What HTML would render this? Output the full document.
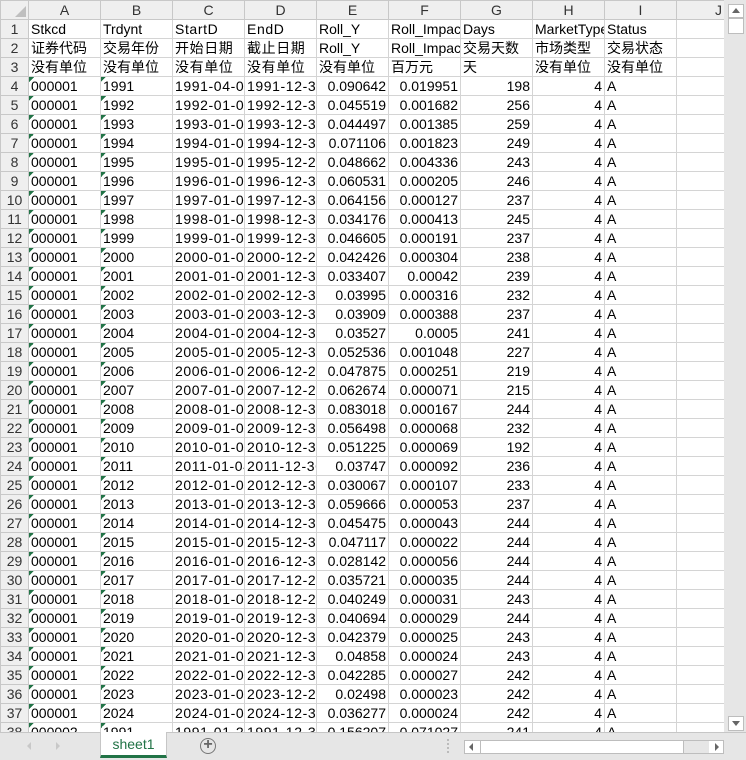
<!DOCTYPE html>
<html><head><meta charset="utf-8"><style>
*{margin:0;padding:0;box-sizing:border-box}
body{width:746px;height:760px;overflow:hidden;background:#e6e6e6;font-family:"Liberation Sans","Noto Sans CJK SC",sans-serif;font-size:14px;color:#000;position:relative}
#w{position:absolute;left:0;top:0;width:724px;height:732px;overflow:hidden;background:#fff}
table{border-collapse:collapse;table-layout:fixed;width:724px}
td{height:19px;border:1px solid #d4d4d4;padding:0 2px;white-space:nowrap;overflow:hidden;line-height:18px;text-overflow:clip}
tr:not(.h) td:nth-child(4),tr:not(.h) td:nth-child(5){letter-spacing:.6px}
tr.h td{background:#efefef;color:#333;text-align:center;border-color:#c8c8c8}
td.r{background:#efefef;color:#333;text-align:center;border-color:#c8c8c8;padding:0}
td.n{text-align:right}
td.g{background:linear-gradient(135deg,#217346 50%,transparent 50%) no-repeat 0 0/5px 5px}
#vs{position:absolute;left:724px;top:0;width:22px;height:732px;background:#e6e6e6}
#vs .b{position:absolute;left:4px;width:16px;background:#fff;border:1px solid #bdbdbd}
#tb{position:absolute;left:0;top:732px;width:746px;height:28px;background:#e6e6e6;border-top:1px solid #c6c6c6}
#tab{position:absolute;left:100px;top:-1px;width:67px;height:26px;background:#fff;border:1px solid #c6c6c6;border-top:none;border-bottom:3px solid #217346;color:#217346;text-align:center;line-height:24px;font-size:14px}
</style></head><body>
<div id="w"><table>
<colgroup><col style="width:28px"><col style="width:72px"><col style="width:72px"><col style="width:72px"><col style="width:72px"><col style="width:72px"><col style="width:72px"><col style="width:72px"><col style="width:72px"><col style="width:72px"><col style="width:48px"></colgroup>
<tr class="h"><td style="background:#efefef;position:relative"><div style="position:absolute;right:2px;bottom:2px;width:0;height:0;border-left:11px solid transparent;border-bottom:11px solid #bfbfbf"></div></td><td>A</td><td>B</td><td>C</td><td>D</td><td>E</td><td>F</td><td>G</td><td>H</td><td>I</td><td style="text-align:right">J</td></tr>
<tr><td class="r">1</td><td>Stkcd</td><td>Trdynt</td><td>StartD</td><td>EndD</td><td>Roll_Y</td><td>Roll_Impact</td><td>Days</td><td>MarketType</td><td>Status</td><td></td></tr>
<tr><td class="r">2</td><td>证券代码</td><td>交易年份</td><td>开始日期</td><td>截止日期</td><td>Roll_Y</td><td>Roll_Impact</td><td>交易天数</td><td>市场类型</td><td>交易状态</td><td></td></tr>
<tr><td class="r">3</td><td>没有单位</td><td>没有单位</td><td>没有单位</td><td>没有单位</td><td>没有单位</td><td>百万元</td><td>天</td><td>没有单位</td><td>没有单位</td><td></td></tr>
<tr><td class="r">4</td><td class="g">000001</td><td class="g">1991</td><td>1991-04-03</td><td>1991-12-31</td><td class="n">0.090642</td><td class="n">0.019951</td><td class="n">198</td><td class="n">4</td><td>A</td><td></td></tr>
<tr><td class="r">5</td><td class="g">000001</td><td class="g">1992</td><td>1992-01-02</td><td>1992-12-31</td><td class="n">0.045519</td><td class="n">0.001682</td><td class="n">256</td><td class="n">4</td><td>A</td><td></td></tr>
<tr><td class="r">6</td><td class="g">000001</td><td class="g">1993</td><td>1993-01-04</td><td>1993-12-31</td><td class="n">0.044497</td><td class="n">0.001385</td><td class="n">259</td><td class="n">4</td><td>A</td><td></td></tr>
<tr><td class="r">7</td><td class="g">000001</td><td class="g">1994</td><td>1994-01-03</td><td>1994-12-30</td><td class="n">0.071106</td><td class="n">0.001823</td><td class="n">249</td><td class="n">4</td><td>A</td><td></td></tr>
<tr><td class="r">8</td><td class="g">000001</td><td class="g">1995</td><td>1995-01-03</td><td>1995-12-29</td><td class="n">0.048662</td><td class="n">0.004336</td><td class="n">243</td><td class="n">4</td><td>A</td><td></td></tr>
<tr><td class="r">9</td><td class="g">000001</td><td class="g">1996</td><td>1996-01-02</td><td>1996-12-31</td><td class="n">0.060531</td><td class="n">0.000205</td><td class="n">246</td><td class="n">4</td><td>A</td><td></td></tr>
<tr><td class="r">10</td><td class="g">000001</td><td class="g">1997</td><td>1997-01-02</td><td>1997-12-31</td><td class="n">0.064156</td><td class="n">0.000127</td><td class="n">237</td><td class="n">4</td><td>A</td><td></td></tr>
<tr><td class="r">11</td><td class="g">000001</td><td class="g">1998</td><td>1998-01-05</td><td>1998-12-31</td><td class="n">0.034176</td><td class="n">0.000413</td><td class="n">245</td><td class="n">4</td><td>A</td><td></td></tr>
<tr><td class="r">12</td><td class="g">000001</td><td class="g">1999</td><td>1999-01-04</td><td>1999-12-30</td><td class="n">0.046605</td><td class="n">0.000191</td><td class="n">237</td><td class="n">4</td><td>A</td><td></td></tr>
<tr><td class="r">13</td><td class="g">000001</td><td class="g">2000</td><td>2000-01-04</td><td>2000-12-29</td><td class="n">0.042426</td><td class="n">0.000304</td><td class="n">238</td><td class="n">4</td><td>A</td><td></td></tr>
<tr><td class="r">14</td><td class="g">000001</td><td class="g">2001</td><td>2001-01-02</td><td>2001-12-31</td><td class="n">0.033407</td><td class="n">0.00042</td><td class="n">239</td><td class="n">4</td><td>A</td><td></td></tr>
<tr><td class="r">15</td><td class="g">000001</td><td class="g">2002</td><td>2002-01-04</td><td>2002-12-31</td><td class="n">0.03995</td><td class="n">0.000316</td><td class="n">232</td><td class="n">4</td><td>A</td><td></td></tr>
<tr><td class="r">16</td><td class="g">000001</td><td class="g">2003</td><td>2003-01-02</td><td>2003-12-31</td><td class="n">0.03909</td><td class="n">0.000388</td><td class="n">237</td><td class="n">4</td><td>A</td><td></td></tr>
<tr><td class="r">17</td><td class="g">000001</td><td class="g">2004</td><td>2004-01-02</td><td>2004-12-31</td><td class="n">0.03527</td><td class="n">0.0005</td><td class="n">241</td><td class="n">4</td><td>A</td><td></td></tr>
<tr><td class="r">18</td><td class="g">000001</td><td class="g">2005</td><td>2005-01-04</td><td>2005-12-30</td><td class="n">0.052536</td><td class="n">0.001048</td><td class="n">227</td><td class="n">4</td><td>A</td><td></td></tr>
<tr><td class="r">19</td><td class="g">000001</td><td class="g">2006</td><td>2006-01-04</td><td>2006-12-29</td><td class="n">0.047875</td><td class="n">0.000251</td><td class="n">219</td><td class="n">4</td><td>A</td><td></td></tr>
<tr><td class="r">20</td><td class="g">000001</td><td class="g">2007</td><td>2007-01-04</td><td>2007-12-28</td><td class="n">0.062674</td><td class="n">0.000071</td><td class="n">215</td><td class="n">4</td><td>A</td><td></td></tr>
<tr><td class="r">21</td><td class="g">000001</td><td class="g">2008</td><td>2008-01-02</td><td>2008-12-31</td><td class="n">0.083018</td><td class="n">0.000167</td><td class="n">244</td><td class="n">4</td><td>A</td><td></td></tr>
<tr><td class="r">22</td><td class="g">000001</td><td class="g">2009</td><td>2009-01-05</td><td>2009-12-31</td><td class="n">0.056498</td><td class="n">0.000068</td><td class="n">232</td><td class="n">4</td><td>A</td><td></td></tr>
<tr><td class="r">23</td><td class="g">000001</td><td class="g">2010</td><td>2010-01-04</td><td>2010-12-31</td><td class="n">0.051225</td><td class="n">0.000069</td><td class="n">192</td><td class="n">4</td><td>A</td><td></td></tr>
<tr><td class="r">24</td><td class="g">000001</td><td class="g">2011</td><td>2011-01-04</td><td>2011-12-30</td><td class="n">0.03747</td><td class="n">0.000092</td><td class="n">236</td><td class="n">4</td><td>A</td><td></td></tr>
<tr><td class="r">25</td><td class="g">000001</td><td class="g">2012</td><td>2012-01-04</td><td>2012-12-31</td><td class="n">0.030067</td><td class="n">0.000107</td><td class="n">233</td><td class="n">4</td><td>A</td><td></td></tr>
<tr><td class="r">26</td><td class="g">000001</td><td class="g">2013</td><td>2013-01-04</td><td>2013-12-31</td><td class="n">0.059666</td><td class="n">0.000053</td><td class="n">237</td><td class="n">4</td><td>A</td><td></td></tr>
<tr><td class="r">27</td><td class="g">000001</td><td class="g">2014</td><td>2014-01-02</td><td>2014-12-31</td><td class="n">0.045475</td><td class="n">0.000043</td><td class="n">244</td><td class="n">4</td><td>A</td><td></td></tr>
<tr><td class="r">28</td><td class="g">000001</td><td class="g">2015</td><td>2015-01-05</td><td>2015-12-31</td><td class="n">0.047117</td><td class="n">0.000022</td><td class="n">244</td><td class="n">4</td><td>A</td><td></td></tr>
<tr><td class="r">29</td><td class="g">000001</td><td class="g">2016</td><td>2016-01-04</td><td>2016-12-30</td><td class="n">0.028142</td><td class="n">0.000056</td><td class="n">244</td><td class="n">4</td><td>A</td><td></td></tr>
<tr><td class="r">30</td><td class="g">000001</td><td class="g">2017</td><td>2017-01-03</td><td>2017-12-29</td><td class="n">0.035721</td><td class="n">0.000035</td><td class="n">244</td><td class="n">4</td><td>A</td><td></td></tr>
<tr><td class="r">31</td><td class="g">000001</td><td class="g">2018</td><td>2018-01-02</td><td>2018-12-28</td><td class="n">0.040249</td><td class="n">0.000031</td><td class="n">243</td><td class="n">4</td><td>A</td><td></td></tr>
<tr><td class="r">32</td><td class="g">000001</td><td class="g">2019</td><td>2019-01-02</td><td>2019-12-31</td><td class="n">0.040694</td><td class="n">0.000029</td><td class="n">244</td><td class="n">4</td><td>A</td><td></td></tr>
<tr><td class="r">33</td><td class="g">000001</td><td class="g">2020</td><td>2020-01-02</td><td>2020-12-31</td><td class="n">0.042379</td><td class="n">0.000025</td><td class="n">243</td><td class="n">4</td><td>A</td><td></td></tr>
<tr><td class="r">34</td><td class="g">000001</td><td class="g">2021</td><td>2021-01-04</td><td>2021-12-31</td><td class="n">0.04858</td><td class="n">0.000024</td><td class="n">243</td><td class="n">4</td><td>A</td><td></td></tr>
<tr><td class="r">35</td><td class="g">000001</td><td class="g">2022</td><td>2022-01-04</td><td>2022-12-30</td><td class="n">0.042285</td><td class="n">0.000027</td><td class="n">242</td><td class="n">4</td><td>A</td><td></td></tr>
<tr><td class="r">36</td><td class="g">000001</td><td class="g">2023</td><td>2023-01-03</td><td>2023-12-29</td><td class="n">0.02498</td><td class="n">0.000023</td><td class="n">242</td><td class="n">4</td><td>A</td><td></td></tr>
<tr><td class="r">37</td><td class="g">000001</td><td class="g">2024</td><td>2024-01-02</td><td>2024-12-31</td><td class="n">0.036277</td><td class="n">0.000024</td><td class="n">242</td><td class="n">4</td><td>A</td><td></td></tr>
<tr><td class="r">38</td><td class="g">000002</td><td class="g">1991</td><td>1991-01-29</td><td>1991-12-31</td><td class="n">0.156207</td><td class="n">0.071027</td><td class="n">241</td><td class="n">4</td><td>A</td><td></td></tr>
</table></div>
<div id="vs">
<div class="b" style="top:4px;height:14px"><div style="position:absolute;left:3px;top:3px;border-left:4px solid transparent;border-right:4px solid transparent;border-bottom:5px solid #666"></div></div>
<div class="b" style="top:18px;height:16px"></div>
<div class="b" style="top:716px;height:15px"><div style="position:absolute;left:3px;top:4px;border-left:4px solid transparent;border-right:4px solid transparent;border-top:5px solid #666"></div></div>
</div>
<div id="tb">
<div style="position:absolute;left:27px;top:9px;border-top:4px solid transparent;border-bottom:4px solid transparent;border-right:4px solid #c8c8c8"></div>
<div style="position:absolute;left:56px;top:9px;border-top:4px solid transparent;border-bottom:4px solid transparent;border-left:4px solid #c8c8c8"></div>
<div id="tab">sheet1</div>
<div style="position:absolute;left:200px;top:5px;width:16px;height:16px;border:1.5px solid #777;border-radius:50%;color:#666;font-size:16px;line-height:12px;text-align:center;font-weight:bold">+</div>
<div style="position:absolute;left:447px;top:6px;width:2px;height:14px;border-left:2px dotted #bbb"></div>
<div style="position:absolute;left:464px;top:7px;width:260px;height:14px;background:#fff;border:1px solid #bdbdbd">
<div style="position:absolute;left:15px;top:-1px;width:204px;height:14px;border:1px solid #bdbdbd;background:#fff"></div>
<div style="position:absolute;left:219px;top:0;width:25px;height:12px;background:#e6e6e6"></div>
<div style="position:absolute;left:4px;top:2px;border-top:4px solid transparent;border-bottom:4px solid transparent;border-right:4px solid #666"></div>
<div style="position:absolute;right:4px;top:2px;border-top:4px solid transparent;border-bottom:4px solid transparent;border-left:4px solid #666"></div>
</div>
</div>
</body></html>
